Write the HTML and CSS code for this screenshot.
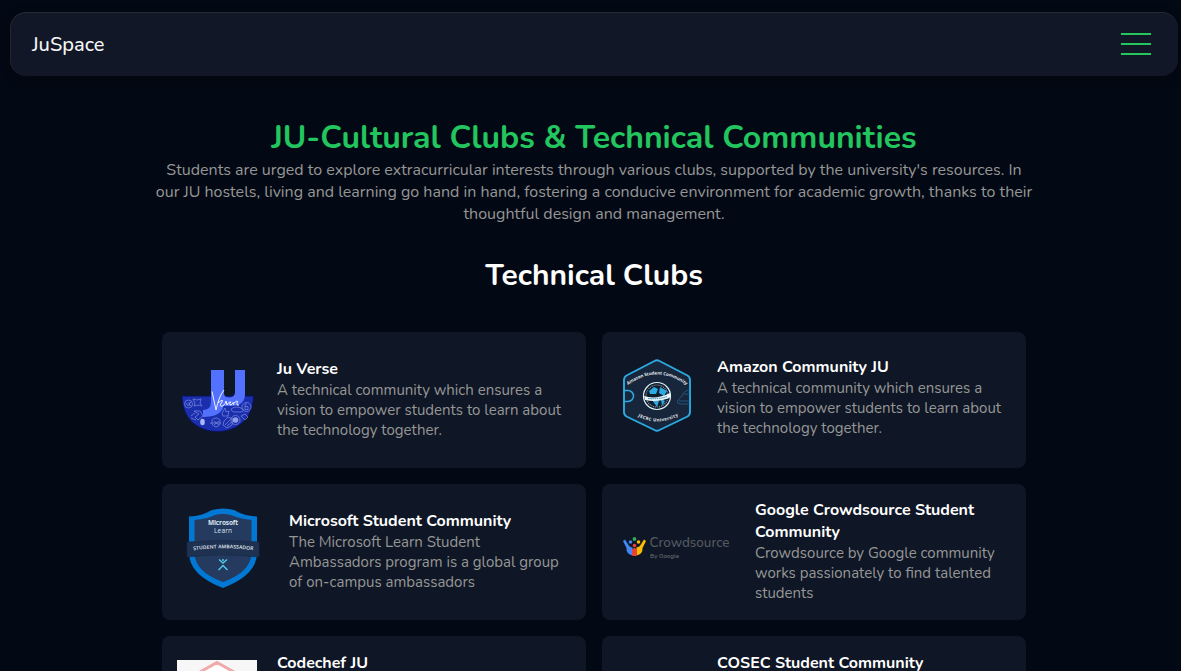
FILE: index.html
```
<!DOCTYPE html>
<html lang="en">
<head>
<meta charset="utf-8">
<title>JuSpace</title>
<link rel="stylesheet" href="styles.css">
</head>
<body>
<header class="navbar">
  <span class="brand">JuSpace</span>
  <button class="menu" aria-label="Menu"><span></span><span></span><span></span></button>
</header>
<main class="page">
  <h1 class="title">JU-Cultural Clubs &amp; Technical Communities</h1>
  <p class="intro">Students are urged to explore extracurricular interests through various clubs, supported by the university's resources. In<br>our JU hostels, living and learning go hand in hand, fostering a conducive environment for academic growth, thanks to their<br>thoughtful design and management.</p>
  <h2 class="subtitle">Technical Clubs</h2>
  <section class="clubs">
    <article class="card card-verse">
      <svg class="logo" viewBox="0 0 80 80">
        <path d="M5 36H76.500C76 59 60 71.500 40.500 71.500S5 59 5 36Z" fill="#1b2fae" stroke="#0a135f" stroke-width="1"/>
        <path d="M34 10H47V33Q47 37.500 52 37.500T58 33V10H68V34Q68 46 54 46H46.500Q44 57 26 57V50Q34 50 34 42Z" fill="#5271ff"/>
        <g fill="none" stroke="#8e9ee8" stroke-width=".7" opacity=".85">
          <circle cx="11.500" cy="44" r="4"/><path d="M9 43l2 3M12 42v4M14 42l-2 2 2 2M16 39l4 1 4-1-1 4 2 3-4-1-4 1 1-3zM17 51l5 3-4 3 3 3 5-4-3-5zM14 56l4-3M14 58l5 2M35 60q4-4 8 0v4q-4 6-8 0zM33 63h11M37 61l5 4M37 65l5-4M47 61l4-4 5 2-1 6-5 3-4-3zM48 65l6-6M50 66l5-4M54 49q5-4 12 0 1 3-3 3h-6q-3-1-3-3zM45 53l3-5 1 4 3-1-1 5h-5z"/>
          <circle cx="69.500" cy="47" r="4.500"/><path d="M68 44.500v5h3v-3h-3M69 43v2"/>
          <circle cx="58.500" cy="60" r="4.500"/><path d="M64 56l4-2 3 3-3 3z"/>
        </g>
        <ellipse cx="25.500" cy="62" rx="2.300" ry="3.300" fill="#aab8ff"/><circle cx="58.500" cy="60" r="2.800" fill="#8e9ee8"/>
        <path d="M35 31.500L39 50Q42 36 47 30M41 43q6-5 4-1-4 5 1 4 3-3 3-5l1 4q2-4 4-3-3 3 0 3l2-2M56 42q2 3 0 3M57 43q5-4 3 0-1 3 2 2" fill="none" stroke="#fff" stroke-width=".9"/>
      </svg>
      <div class="info"><h3>Ju Verse</h3>
      <p>A technical community which ensures a<br>vision to empower students to learn about<br>the technology together.</p></div>
    </article>
    <article class="card card-amazon">
      <svg class="logo" viewBox="0 0 80 80">
        <path d="M37.500 5Q40 3.500 42.500 5L70.500 19.500Q73 21 73 24V56Q73 59 70.500 60.500L42.500 74Q40 75.500 37.500 74L9.500 60.500Q7 59 7 56V24Q7 21 9.500 19.500Z" fill="#17263b" stroke="#2caae1" stroke-width="1.900"/>
        <path d="M7 34.500h4a5.500 5.500 0 0 1 0 11H7" fill="none" stroke="#2caae1" stroke-width="1.500"/>
        <path d="M73 34q-6 0-8 6l-4 4q-2 4 3 4h9M62 45h11M67 38h6" fill="none" stroke="#266a96" stroke-width=".7"/>
        <circle cx="40" cy="40" r="13.500" fill="#101d2d" stroke="#e5f4fa" stroke-width="1.200"/>
        <circle cx="40" cy="40" r="11" fill="none" stroke="#8fa0af" stroke-width="1.200" stroke-dasharray="1 1"/>
        <path d="M32 35l5-4 4 2-2 5h-6zM43 31l7 4-3 5-5-3zM35 44l7 1-2 6zM44 43l4 2-3 5z" fill="#2caae1"/>
        <path d="M27 40q12 4 26-3l1 4q-12 6-26 3z" fill="#eaf7fd"/>
        <path d="M31 42.500q11 1 19-2" fill="none" stroke="#2582a9" stroke-dasharray="1.500 .7"/>
        <path id="arcTop" d="M11 29Q40 8 69 29L74 33" fill="none"/><path id="arcBottom" d="M20 60Q40 71 61 60" fill="none"/>
        <g class="badge-text"><text><textPath href="#arcTop">Amazon Student Community</textPath></text><text><textPath href="#arcBottom" startOffset="1" textLength="42">JECRC University</textPath></text></g>
      </svg>
      <div class="info"><h3>Amazon Community JU</h3>
      <p>A technical community which ensures a<br>vision to empower students to learn about<br>the technology together.</p></div>
    </article>
    <article class="card card-ms">
      <svg class="logo logo-ms" viewBox="0 0 92 80">
        <path d="M12 8.500C24 8 29 5 35 2Q46-1 57 2C63 5 68 8 80 8.500V45Q80 67 46 80Q12 67 12 45Z" fill="#0078d4"/>
        <path d="M17.500 12Q31 11 38 7Q46 5 54 7Q63 11 74.500 12V45Q74 64 46 74Q18 64 17.500 45Z" fill="#243a5e"/>
        <path d="M10 34Q46 31 82 34V49Q46 45 10 49Z" fill="#1e3151" stroke="#182a47" stroke-width=".6"/>
        <path d="M42 51.500l4 3.500 4-3.500M41.500 62l4.500-4.500 4.500 4.500" fill="none" stroke="#50c6e8" stroke-width="1.500"/><circle cx="46" cy="52" r="1" fill="#50c6e8"/>
        <path id="ribbon" d="M15.500 42.500Q46 38 78 42.500" fill="none"/>
        <g class="ms-text"><text x="46" y="17" textLength="30">Microsoft</text><text class="learn" x="46" y="25" textLength="18">Learn</text></g>
        <text class="ribbon-text"><textPath href="#ribbon" startOffset="1" textLength="60">STUDENT AMBASSADOR</textPath></text>
      </svg>
      <div class="info"><h3>Microsoft Student Community</h3>
      <p>The Microsoft Learn Student<br>Ambassadors program is a global group<br>of on-campus ambassadors</p></div>
    </article>
    <article class="card card-google">
      <svg class="logo logo-google" viewBox="0 0 118 40">
        <path d="M7 17.500L10.500 23q2 3 4 2v8.500Q8 32 8.500 26L5 19Z" fill="#4285f4"/><path d="M26 17.500L22.500 23q-2 3-4 2v8.500Q25 32 24.500 26L28 19Z" fill="#fbbc04"/>
        <path d="M14 33.500v-5q0-2.500 2.500-2.500t2.500 2.500v5q-2.500 1-5 0Z" fill="#ea4335"/>
        <circle cx="16.500" cy="17" r="1.900" fill="#34a853"/><circle cx="12.500" cy="20" r="1.800" fill="#4285f4"/><circle cx="20.500" cy="20" r="1.800" fill="#fbbc04"/><circle cx="16.500" cy="23.500" r="1.800" fill="#ea4335"/>
        <text class="crowd" x="31.500" y="25" textLength="80" lengthAdjust="spacingAndGlyphs">Crowdsource</text><text class="bygoogle" x="32" y="35.500" textLength="29" lengthAdjust="spacingAndGlyphs">By Google</text>
      </svg>
      <div class="info"><h3>Google Crowdsource Student<br>Community</h3>
      <p>Crowdsource by Google community<br>works passionately to find talented<br>students</p></div>
    </article>
    <article class="card card-next">
      <svg class="logo" viewBox="0 0 80 80"><path fill="#f7f7f7" d="M0 0h80v80H0z"/><path d="M40 2.500L73 21v38L40 78 7 59V21Z" fill="#fff" stroke="#f0aaa8" stroke-width="3"/></svg>
      <div class="info"><h3>Codechef JU</h3></div>
    </article>
    <article class="card card-next">
      <div class="logo"></div>
      <div class="info"><h3>COSEC Student Community</h3></div>
    </article>
  </section>
</main>
</body>
</html>
```
FILE: styles.css
```
* { box-sizing: border-box; }
html { background: #030914; overflow: hidden; }
body { margin: 0; padding-top: 12px; width: 1188px; height: 671px; overflow: hidden; color: #fff; font-family: Nunito, Lato, sans-serif; }
h1, h2, h3, p { margin: 0; }
.navbar { display: flex; align-items: center; justify-content: space-between; margin: 0 10px; width: 1168px; height: 64px; padding: 0 27px 0 20px; border-radius: 16px; background: #111726; border-top: 1px solid #252b36; border-left: 1px solid #202633; box-shadow: 0 3px 8px #01040a80; }
.brand { padding-left: 1px; font-size: 20px; font-weight: 500; color: #f5f5f5; }
.menu { width: 30px; padding: 0 0 2px; border: 0; background: none; display: grid; gap: 8px; }
.menu span { height: 2px; background: #22c55e; }
.page { padding-top: 40px; }
.title { font-size: 32px; line-height: 43px; text-align: center; color: #22c55e; }
.intro { font-size: 16px; line-height: 22px; text-align: center; color: #969696; white-space: nowrap; }
.subtitle { font-size: 30px; line-height: 42px; margin-top: 30px; text-align: center; }
.clubs { display: grid; grid-template-columns: 424px 424px; gap: 16px; margin: 35px 0 0 162px; }
.card { height: 136px; display: flex; align-items: center; gap: 20px; padding: 0 15px 2px; border-radius: 8px; background: #0f1625; white-space: nowrap; }
.card h3 { font-size: 16px; line-height: 22px; }
.card p { font-size: 15px; line-height: 20px; color: #969696; }
.logo { width: 80px; height: 80px; flex: none; }
.card-verse .logo { margin-top: 2px; }
.card-amazon { padding-bottom: 6px; }
.card-amazon .logo { margin-bottom: 2px; }
.logo-ms { width: 92px; margin-bottom: 6px; }
.logo-google { width: 118px; height: 40px; margin: 0 -1px 18px 1px; }
.card-next { align-items: flex-start; padding-top: 16px; }
.card-next .logo { margin-top: 8px; }
.badge-text { font: 700 4.400px "Open Sans", sans-serif; fill: #e7edf2; }
.ms-text { font: 700 6.500px "Open Sans", sans-serif; fill: #dce4ee; text-anchor: middle; }
.ms-text .learn { font-weight: 400; }
.ribbon-text { font: 600 5px "Open Sans", sans-serif; fill: #e7edf4; }
.crowd { font: 500 14px Nunito, Lato, sans-serif; fill: #555a62; }
.bygoogle { font: 500 6.500px Nunito, Lato, sans-serif; fill: #6b6f76; }
```
